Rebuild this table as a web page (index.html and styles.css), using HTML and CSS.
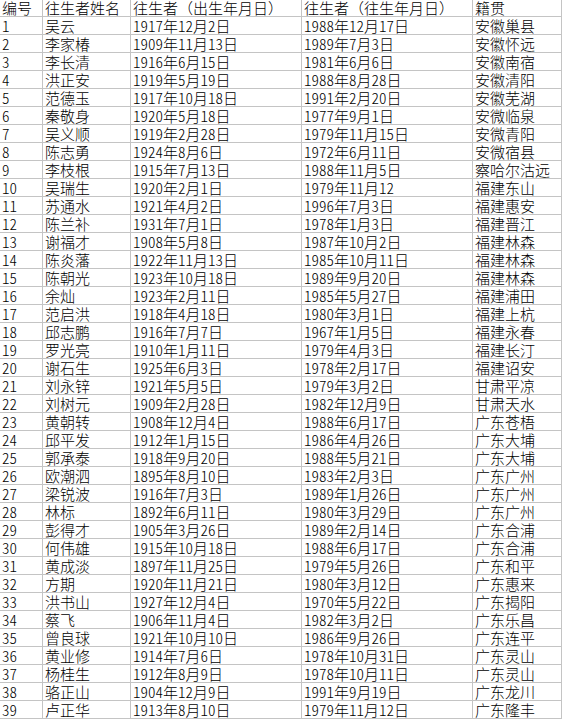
FILE: index.html
```html
<!DOCTYPE html>
<html lang="zh-CN">
<head>
<meta charset="utf-8">
<title>往生者名录</title>
<link rel="stylesheet" href="styles.css">
</head>
<body>
<table class="sheet">
<thead>
<tr class="head"><th class="c1">编号</th><th class="c2">往生者姓名</th><th class="c3">往生者（出生年月日）</th><th class="c4">往生者（往生年月日）</th><th class="c5">籍贯</th></tr>
</thead>
<tbody>
<tr><td>1</td><td>吴云</td><td>1917年12月2日</td><td>1988年12月17日</td><td>安徽巢县</td></tr>
<tr><td>2</td><td>李家椿</td><td>1909年11月13日</td><td>1989年7月3日</td><td>安徽怀远</td></tr>
<tr><td>3</td><td>李长清</td><td>1916年6月15日</td><td>1981年6月6日</td><td>安徽南宿</td></tr>
<tr><td>4</td><td>洪正安</td><td>1919年5月19日</td><td>1988年8月28日</td><td>安徽清阳</td></tr>
<tr><td>5</td><td>范德玉</td><td>1917年10月18日</td><td>1991年2月20日</td><td>安徽芜湖</td></tr>
<tr><td>6</td><td>秦敬身</td><td>1920年5月18日</td><td>1977年9月1日</td><td>安微临泉</td></tr>
<tr><td>7</td><td>吴义顺</td><td>1919年2月28日</td><td>1979年11月15日</td><td>安微青阳</td></tr>
<tr><td>8</td><td>陈志勇</td><td>1924年8月6日</td><td>1972年6月11日</td><td>安微宿县</td></tr>
<tr><td>9</td><td>李枝根</td><td>1915年7月13日</td><td>1988年11月5日</td><td>察哈尔沽远</td></tr>
<tr><td>10</td><td>吴瑞生</td><td>1920年2月1日</td><td>1979年11月12</td><td>福建东山</td></tr>
<tr><td>11</td><td>苏通水</td><td>1921年4月2日</td><td>1996年7月3日</td><td>福建惠安</td></tr>
<tr><td>12</td><td>陈兰补</td><td>1931年7月1日</td><td>1978年1月3日</td><td>福建晋江</td></tr>
<tr><td>13</td><td>谢福才</td><td>1908年5月8日</td><td>1987年10月2日</td><td>福建林森</td></tr>
<tr><td>14</td><td>陈炎藩</td><td>1922年11月13日</td><td>1985年10月11日</td><td>福建林森</td></tr>
<tr><td>15</td><td>陈朝光</td><td>1923年10月18日</td><td>1989年9月20日</td><td>福建林森</td></tr>
<tr><td>16</td><td>余灿</td><td>1923年2月11日</td><td>1985年5月27日</td><td>福建浦田</td></tr>
<tr><td>17</td><td>范启洪</td><td>1918年4月18日</td><td>1980年3月1日</td><td>福建上杭</td></tr>
<tr><td>18</td><td>邱志鹏</td><td>1916年7月7日</td><td>1967年1月5日</td><td>福建永春</td></tr>
<tr><td>19</td><td>罗光亮</td><td>1910年1月11日</td><td>1979年4月3日</td><td>福建长汀</td></tr>
<tr><td>20</td><td>谢石生</td><td>1925年6月3日</td><td>1978年2月17日</td><td>福建诏安</td></tr>
<tr><td>21</td><td>刘永锌</td><td>1921年5月5日</td><td>1979年3月2日</td><td>甘肃平凉</td></tr>
<tr><td>22</td><td>刘树元</td><td>1909年2月28日</td><td>1982年12月9日</td><td>甘肃天水</td></tr>
<tr><td>23</td><td>黄朝转</td><td>1908年12月4日</td><td>1988年6月17日</td><td>广东苍梧</td></tr>
<tr><td>24</td><td>邱平发</td><td>1912年1月15日</td><td>1986年4月26日</td><td>广东大埔</td></tr>
<tr><td>25</td><td>郭承泰</td><td>1918年9月20日</td><td>1988年5月21日</td><td>广东大埔</td></tr>
<tr><td>26</td><td>欧潮泗</td><td>1895年8月10日</td><td>1983年2月3日</td><td>广东广州</td></tr>
<tr><td>27</td><td>梁锐波</td><td>1916年7月3日</td><td>1989年1月26日</td><td>广东广州</td></tr>
<tr><td>28</td><td>林标</td><td>1892年6月11日</td><td>1980年3月29日</td><td>广东广州</td></tr>
<tr><td>29</td><td>彭得才</td><td>1905年3月26日</td><td>1989年2月14日</td><td>广东合浦</td></tr>
<tr><td>30</td><td>何伟雄</td><td>1915年10月18日</td><td>1988年6月17日</td><td>广东合浦</td></tr>
<tr><td>31</td><td>黄成淡</td><td>1897年11月25日</td><td>1979年5月26日</td><td>广东和平</td></tr>
<tr><td>32</td><td>方期</td><td>1920年11月21日</td><td>1980年3月12日</td><td>广东惠来</td></tr>
<tr><td>33</td><td>洪书山</td><td>1927年12月4日</td><td>1970年5月22日</td><td>广东揭阳</td></tr>
<tr><td>34</td><td>蔡飞</td><td>1906年11月4日</td><td>1982年3月2日</td><td>广东乐昌</td></tr>
<tr><td>35</td><td>曾良球</td><td>1921年10月10日</td><td>1986年9月26日</td><td>广东连平</td></tr>
<tr><td>36</td><td>黄业修</td><td>1914年7月6日</td><td>1978年10月31日</td><td>广东灵山</td></tr>
<tr><td>37</td><td>杨桂生</td><td>1912年8月9日</td><td>1978年10月11日</td><td>广东灵山</td></tr>
<tr><td>38</td><td>骆正山</td><td>1904年12月9日</td><td>1991年9月19日</td><td>广东龙川</td></tr>
<tr><td>39</td><td>卢正华</td><td>1913年8月10日</td><td>1979年11月12日</td><td>广东隆丰</td></tr>
</tbody>
</table>
</body>
</html>
```
FILE: styles.css
```css
html, body {
  margin: 0;
  padding: 0;
  background: #ffffff;
}

.sheet {
  table-layout: fixed;
  width: 562px;
  border-collapse: separate;
  border-spacing: 0;
  font-family: "Noto Sans CJK SC", "Noto Sans", sans-serif;
  font-size: 15px;
  font-weight: 300;
  color: #000000;
}

.sheet th,
.sheet td {
  box-sizing: border-box;
  padding: 0 0 0 2px;
  border-right: 1px solid #c4c4c4;
  border-bottom: 1px solid #c4c4c4;
  text-align: left;
  font-weight: 300;
  white-space: nowrap;
  line-height: 17px;
  height: 18px;
  vertical-align: middle;
}

.sheet td {
  font-feature-settings: "hwid" 1;
}

.sheet .head th {
  line-height: 16px;
  height: 17px;
}

.c1 { width: 43px; }
.c2 { width: 88px; }
.c3 { width: 171px; }
.c4 { width: 171px; }
.c5 { width: 89px; }
```
